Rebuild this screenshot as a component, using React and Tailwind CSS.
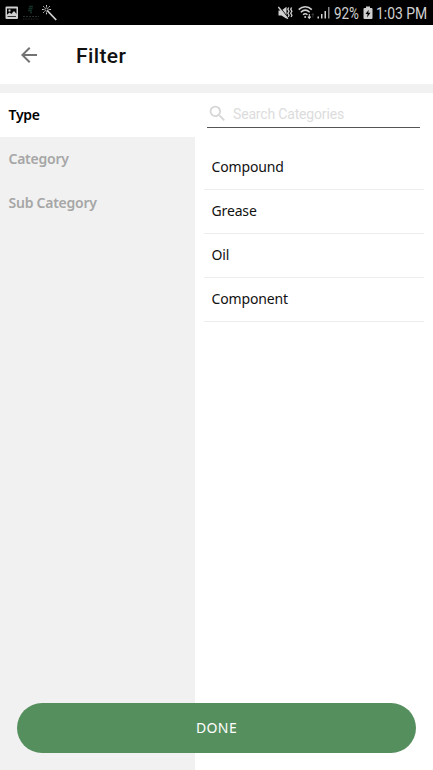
const TABS = ['Type', 'Category', 'Sub Category'];
const OPTIONS = ['Compound', 'Grease', 'Oil', 'Component'];

function StatusBar() {
  return (
    <div className="flex h-[25px] shrink-0 items-center bg-black pl-[5px] pr-[6px] text-[#d0d0d0]">
      <svg className="h-[14px] w-[14px]" viewBox="0 0 14 14">
        <path fill="currentColor" fillRule="evenodd" d="M1.5 .5h10.500a1 1 0 0 1 1 1v10.500a1 1 0 0 1-1 1h-10.500a1 1 0 0 1-1-1v-10.500a1 1 0 0 1 1-1zM2 2.500v6.300l2.500-2.300 1.800 1.500 2.700-3 2.500 3V2.500zM3.500 3.500h2v2h-2zM2.500 10.200v.8h8.500v-.8z" />
      </svg>
      <svg className="ml-[3px] h-[16px] w-[18px]" viewBox="0 0 18 16" fill="none" stroke="#26302c">
        <path d="M7 1.5h4M6.500 3.5h4M6 5.5h4M8 7.5h2" stroke="#143026" strokeWidth="1.3" />
        <path d="M1 11.5h16" strokeDasharray="2 1" />
        <path d="M1 14h16" stroke="#383838" strokeDasharray="1 .6" strokeWidth=".7" />
      </svg>
      <svg className="ml-[2px] h-[16px] w-[16px]" viewBox="0 0 16 16" fill="none" stroke="currentColor">
        <path d="M5.200 5.500l9 9.500" strokeWidth="1.800" />
        <path d="M4.500 0v1.800M4.500 7.500v1.800M0 4.500h1.800M7.300 4.500h1.800M1.200 1.200l1.300 1.300M7.800 1.200L6.500 2.500M1.200 7.800l1.300-1.300" strokeWidth="1" />
        <circle cx="4.500" cy="4.500" r="1.600" strokeWidth=".8" />
      </svg>
      <svg className="ml-auto h-[14px] w-[15px]" viewBox="0 0 15 14">
        <path fill="currentColor" d="M0.500 4.500h3L8.500 .8v12L3.500 9.500h-3z" />
        <path d="M.8 .2l9.500 12" stroke="#000" strokeWidth="1.200" />
        <path d="M.3 1l9.500 11.800" stroke="currentColor" strokeWidth="1.400" />
        <path d="M10.700 1.500l-.9 1.800 1.200 2-1.200 1.900 1.200 2-.8 1.800M13.600 1.500l-.9 1.800 1.200 2-1.200 1.900 1.200 2-.8 1.800" fill="none" stroke="currentColor" strokeWidth="1.300" />
      </svg>
      <svg className="ml-[5px] h-[15px] w-[17px]" viewBox="0 0 17 15" fill="none" stroke="currentColor">
        <path d="M.7 4.600C4.500 .8 10 .8 13.800 4.600M2.800 7.200c2.800-2.600 6.100-2.600 8.900 0M5 9.700c1.500-1.300 3-1.300 4.500 0" strokeWidth="1.500" />
        <circle cx="7.200" cy="11.900" r="1" fill="currentColor" stroke="none" />
        <path d="M11.300 9v4.200M9.900 11.700l1.400 1.600 1.400-1.600" strokeWidth="1.100" />
        <path d="M14.800 12.500V8.700M13.700 10l1.100-1.400 1.100 1.400" stroke="#444" strokeWidth=".8" />
      </svg>
      <svg className="ml-[2px] h-[13px] w-[14px]" viewBox="0 0 14 13" fill="currentColor">
        <path d="M.5 10.500h1.500V12.500H.5zM4 8h1.500v4.500H4zM7.500 5H9v7.500H7.500z" />
        <path d="M11 1h1.500v11.500H11z" fill="#888" />
      </svg>
      <span className="ml-[3px] w-[27px] origin-left scale-x-[0.84] whitespace-nowrap font-[Roboto,sans-serif] text-[16px] leading-[25px] mt-[2px]">92%</span>
      <svg className="ml-[2px] h-[14px] w-[10px]" viewBox="0 0 10 14">
        <path fill="currentColor" d="M3 .5h4V2h1.500a1 1 0 0 1 1 1v9a1 1 0 0 1-1 1h-7a1 1 0 0 1-1-1V3a1 1 0 0 1 1-1H3z" />
        <path d="M5.700 3.800L2.500 8h2.100L4 11.500l3.500-4.700H5.300z" fill="#000" />
      </svg>
      <span className="ml-[3px] mt-[2px] w-[51px] origin-left scale-x-[0.87] whitespace-nowrap font-[Roboto,sans-serif] text-[16px] leading-[25px]">1:03 PM</span>
    </div>
  );
}

export default function App() {
  return (
    <div className="relative flex h-[770px] w-[433px] flex-col overflow-hidden bg-white font-['Noto_Sans',sans-serif]">
      <StatusBar />
      <header className="flex h-[59px] shrink-0 items-center pl-[17px]">
        <button aria-label="Back" className="text-[#737373]">
          <svg className="h-[24px] w-[24px]" viewBox="0 0 24 24" fill="currentColor">
            <path d="M20 11H7.830l5.590-5.590L12 4l-8 8 8 8 1.410-1.410L7.830 13H20v-2z" />
          </svg>
        </button>
        <h1 className="ml-[35px] mt-[3px] font-[Roboto,sans-serif] text-[21px] font-medium leading-[28px] tracking-[0.4px] text-[#111]">Filter</h1>
      </header>
      <div className="h-[9px] shrink-0 bg-[#f1f1f1]" />
      <div className="flex min-h-0 flex-1">
        <nav className="w-[195px] shrink-0 bg-[#f1f1f1]">
          {TABS.map((tab, i) => (
            <div
              key={tab}
              className={
                'flex h-[44px] items-center pb-[2px] pl-[8.5px] text-[14px] font-semibold tracking-[-0.25px] ' +
                (i === 0 ? 'bg-white text-black' : 'text-[#a6a6a6]')
              }
            >
              {tab}
            </div>
          ))}
        </nav>
        <main className="flex-1 pl-[9px] pr-[9px]">
          <div className="ml-[3px] mr-[4px] flex h-[35px] items-center border-b border-[#555] pt-[7px]">
            <svg className="h-[21px] w-[21px] text-[#d6d6d6]" viewBox="0 0 24 24" fill="currentColor">
              <path d="M15.500 14h-.79l-.28-.27A6.471 6.471 0 0 0 16 9.500 6.500 6.500 0 1 0 9.500 16c1.610 0 3.090-.59 4.230-1.570l.27.28v.79l5 4.990L20.490 19l-4.990-5zm-6 0C7.010 14 5 11.990 5 9.500S7.010 5 9.500 5 14 7.010 14 9.500 11.990 14 9.500 14z" />
            </svg>
            <span className="ml-[5px] mt-[2px] font-[Roboto,sans-serif] text-[14px] tracking-[-0.17px] text-[#dcdcdc]">Search Categories</span>
          </div>
          <ul className="mt-[18px]">
            {OPTIONS.map((option) => (
              <li key={option} className="flex h-[44px] items-center border-b border-[#ededed] pb-[2px] pl-[7.5px] text-[14px] tracking-[-0.15px] text-[#111]">
                {option}
              </li>
            ))}
          </ul>
        </main>
      </div>
      <button className="absolute bottom-[17px] left-[17px] flex h-[50.5px] w-[399px] items-center justify-center rounded-full bg-[#568f5e] pb-[1px] text-[14px] tracking-[0.4px] text-white">
        DONE
      </button>
    </div>
  );
}
